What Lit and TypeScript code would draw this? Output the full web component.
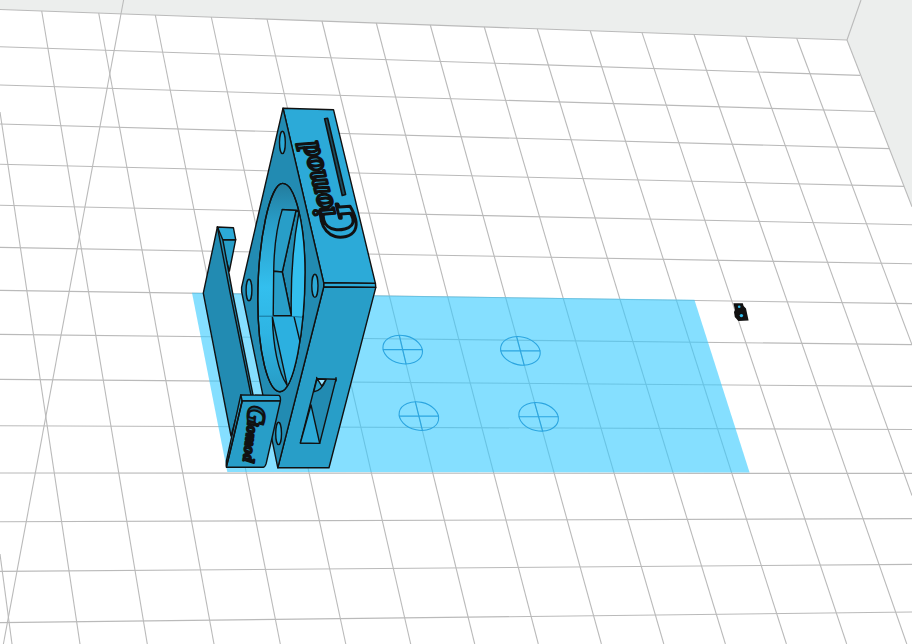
import { LitElement, css, html, svg } from "lit";
import { customElement } from "lit/decorators.js";

type Segment = [number, number, number, number];

// Floor grid lines that run across the build plate.
const rows: Segment[] = [
  [0, 9.5, 847, 40],
  [0, 46.7, 860, 75.4],
  [0, 85, 874.7, 111.5],
  [0, 124, 889.6, 148.6],
  [0, 164.3, 904, 186.4],
  [0, 205.3, 912, 224.7],
  [0, 247.4, 912, 263.8],
  [0, 290.4, 912, 303.6],
  [0, 334.4, 912, 344.6],
  [0, 379.4, 912, 386.4],
  [0, 425.7, 912, 429.5],
  [0, 473, 912, 473.4],
  [0, 521.7, 912, 518.6],
  [0, 571.4, 912, 564.4],
  [0, 622.6, 912, 612],
];

// Floor grid lines that run towards the back wall.
const columns: Segment[] = [
  [0, 554, 12, 644],
  [0, 112, 80, 644],
  [41.7, 11, 147.3, 644],
  [98.7, 13, 214, 644],
  [155.3, 15, 280.3, 644],
  [211.3, 17, 345.8, 644],
  [267, 19, 410.7, 644],
  [322, 21, 474.7, 644],
  [376.3, 23, 538.3, 644],
  [430.3, 25, 601.4, 644],
  [484.3, 27, 663.8, 644],
  [537.3, 29, 725.4, 644],
  [590.3, 31, 786.4, 644],
  [642, 32.6, 846.7, 644],
  [694, 34.5, 906.8, 644],
  [745.7, 36.3, 912, 495.5],
  [796.7, 38.2, 912, 344.8],
  [847, 40, 912, 206.7],
];

// Vertical edges of the build volume.
const volumeEdges: Segment[] = [
  [123.6, 0, 3.4, 644],
  [861, 0, 847, 40],
];

interface Marker {
  x: number;
  y: number;
  lean: number;
}

const markers: Marker[] = [
  { x: 402.7, y: 349.6, lean: 3.4 },
  { x: 520.4, y: 350.9, lean: 3.8 },
  { x: 418.9, y: 416.1, lean: 3.6 },
  { x: 538.6, y: 416.8, lean: 4.1 },
];

const holes = [
  [282.4, 142.4, 2.9, 11.2],
  [249, 290, 2.9, 10.8],
  [314.9, 285.8, 3.1, 11.6],
  [278.6, 433.4, 2.9, 11.2],
];

const bore =
  "M282.7 183.4C270 183.4 257.8 240 257.8 300C257.8 352 268 391.7 280 391.7C294 391.7 305 330 305 272C305 224 295 183.4 282.7 183.4Z";

const line = ([x1, y1, x2, y2]: Segment) =>
  svg`<line x1=${x1} y1=${y1} x2=${x2} y2=${y2} />`;

@customElement("model-viewport")
export class ModelViewport extends LitElement {
  static styles = css`
    :host {
      display: block;
      height: 100%;
    }
    .scene {
      display: block;
      width: 100%;
      height: 100%;
    }
    .wall { fill: #eceeed; }
    .floor { fill: #ffffff; }
    .grid { stroke: #bababa; stroke-width: 1.1; fill: none; }
    .sheet { fill: #34caff; fill-opacity: 0.6; }
    .marker { stroke: #2ba5e0; stroke-width: 1.1; fill: none; }
    .solid { stroke: #111111; stroke-width: 1.4; stroke-linejoin: round; stroke-linecap: round; }
    .top { fill: #2caad8; }
    .front { fill: #289ec8; }
    .side { fill: #228bb2; }
    .bright { fill: #33bfee; }
    .glow { fill: #2cb0e0; }
    .sky { fill: #9be5ff; }
    .edge { fill: none; }
    .seam { fill: none; stroke: #17749a; stroke-width: 1; }
    .dark { fill: #111111; }
    .lettering {
      font-family: "Liberation Serif", serif;
      font-weight: 700;
      font-style: italic;
      stroke: #111111;
      stroke-linejoin: round;
    }
    .large { font-size: 30px; fill: #2caad8; stroke-width: 3; }
    .large .initial { font-size: 50px; }
    .small { font-size: 16px; fill: #17607a; stroke-width: 2; }
    .small .initial { font-size: 26px; }
  `;

  private marker({ x, y, lean }: Marker) {
    return svg`
      <ellipse cx=${x} cy=${y} rx="20" ry="14" transform="rotate(12 ${x} ${y})" />
      <line x1=${x - 20} y1=${y} x2=${x + 20} y2=${y} />
      <line x1=${x - lean} y1=${y - 14.5} x2=${x + lean} y2=${y + 14.5} />`;
  }

  private floor() {
    return svg`
      <rect class="wall" width="912" height="644" />
      <path class="floor" d="M0 9.5L847 40L912 206.7V644H0Z" />
      <g class="grid">
        ${rows.map(line)}${columns.map(line)}${volumeEdges.map(line)}
      </g>
      <path class="sheet" d="M192 292.8L694.4 299.8L749.6 472.4L227.3 472Z" />
      <g class="marker">${markers.map((m) => this.marker(m))}</g>`;
  }

  private housing() {
    return svg`
      <g class="solid">
        <path class="top" d="M283 108.2L333.5 109.7L375.4 283.4L323.7 282.8Z" />
        <path class="top" d="M323.7 282.8L375.4 283.4L375.8 287.4L323.7 287Z" />
        <path class="front" d="M323.7 287L375.8 287.4L329 467.8L277.8 467.8Z" />
        <path class="side" d="M283 108.2L323.7 282.8V287L277.8 467.8L241.6 291.5V287.3Z" />
        <path d=${bore} fill="url(#bore-shade)" />
      </g>
      <g class="solid" clip-path="url(#bore-clip)">
        <path class="bright" stroke="none" d="M299 211C291 250 290 290 291.3 315.7H310V240Z" />
        <path class="glow" stroke="none" d="M272.6 316L306 317V340L287.4 386Z" />
        <path class="side" d="M296 210.5L282.3 272L291.3 315.7C290.6 280 293 243 299 212Z" />
        <path class="front" d="M282.3 209.4L296 210.4L282.3 272L273.7 271.2C274 248 277 226 282.3 209.4Z" />
        <path class="front" d="M273.7 271.2L282.3 272L291.3 315.7H273.2Z" />
        <path class="edge" d="M282.3 209.6L299 210.4" />
        <path class="front" d="M272.4 317C273 345 278 372 287.3 385.6Z" />
        <path class="edge" d="M294.2 317.4L300.6 344" />
        <path class="seam" d="M258 316.2H273M292 316.4L305 317.4" />
      </g>
      <g class="solid">
        <path class="edge" d=${bore} />
        ${holes.map(
          ([x, y, rx, ry]) =>
            svg`<ellipse class="top" cx=${x} cy=${y} rx=${rx} ry=${ry} />`
        )}
        <path class="side" d="M316.7 378.6L336 379.2L319.7 443.4L300.4 443Z" />
        <path class="top" d="M311 404.8L319.7 443.4L300.4 443Z" />
        <path class="front" d="M316.7 380L326 379.6C323.5 386 319 391.5 313.8 391.7Z" />
        <path class="sky" d="M317.6 379.4H326L321.9 386.2Z" />
        <path class="edge" d="M316.7 377.4V380M336 377.6V381" />
        <path class="dark" fill-opacity="0.6" stroke-width="1.6" d="M324.6 118.8L327.6 118.2L345.6 194.4L342.2 195.4Z" />
      </g>
      <text class="lettering large" transform="translate(359 235) rotate(-104)"><tspan class="initial">G</tspan><tspan dx="-10" dy="-18">iomod</tspan></text>`;
  }

  private bracket() {
    return svg`
      <g class="solid">
        <path class="front" d="M220.3 239.7H235.7L229.4 271Z" />
        <path class="top" d="M217.4 227L233.4 227.7L235.7 239.7H220.3Z" />
        <path class="side" d="M217.4 227L222.8 239.7L232.6 293L253.2 396L241 400L231 436L203.3 293.2Z" />
        <path class="edge" d="M217.4 227L230.2 293L251.2 396" />
        <path class="front" d="M240.8 394.9L242.2 401L229.2 466.6L226.2 465.6L226.4 461Z" />
        <path class="top" d="M240.8 394.9L278.8 395.4Q280.8 396 280.4 401H242.2Z" />
        <path class="front" d="M242.2 401H280.4L266.2 463.4Q265.2 467 263.4 467.2H226.4Z" />
        <path class="edge" d="M242.2 401L229.4 455L226.4 466.6" />
      </g>
      <text class="lettering small" transform="translate(249 405) rotate(97)"><tspan class="initial">G</tspan><tspan dx="-3" dy="-1">iomod</tspan></text>`;
  }

  private stray() {
    return svg`
      <path class="dark" d="M733.4 303.2H742.8L743.6 306L746 308.4L748.6 320.4L738.4 321L734.8 317L734 312L735 310Z" />
      <circle class="bright" cx="739.2" cy="306.8" r="1.3" />
      <circle class="bright" cx="741.4" cy="315.6" r="1.7" />`;
  }

  render() {
    return html`
      <svg class="scene" viewBox="0 0 912 644" preserveAspectRatio="xMidYMid slice" role="img" aria-label="Giomod">
        <defs>
          <linearGradient id="bore-shade" x1="0" y1="0" x2="0" y2="1">
            <stop offset="0" stop-color="#237c9d" />
            <stop offset="0.18" stop-color="#289cc6" />
            <stop offset="0.5" stop-color="#33bfee" />
            <stop offset="0.72" stop-color="#2eb4e3" />
            <stop offset="1" stop-color="#279bc4" />
          </linearGradient>
          <clipPath id="bore-clip"><path d=${bore} /></clipPath>
        </defs>
        ${this.floor()}${this.housing()}${this.bracket()}${this.stray()}
      </svg>
    `;
  }
}

@customElement("app-root")
export class AppRoot extends LitElement {
  static styles = css`
    :host {
      display: block;
      height: 100vh;
      overflow: hidden;
    }
  `;

  render() {
    return html`<model-viewport></model-viewport>`;
  }
}
